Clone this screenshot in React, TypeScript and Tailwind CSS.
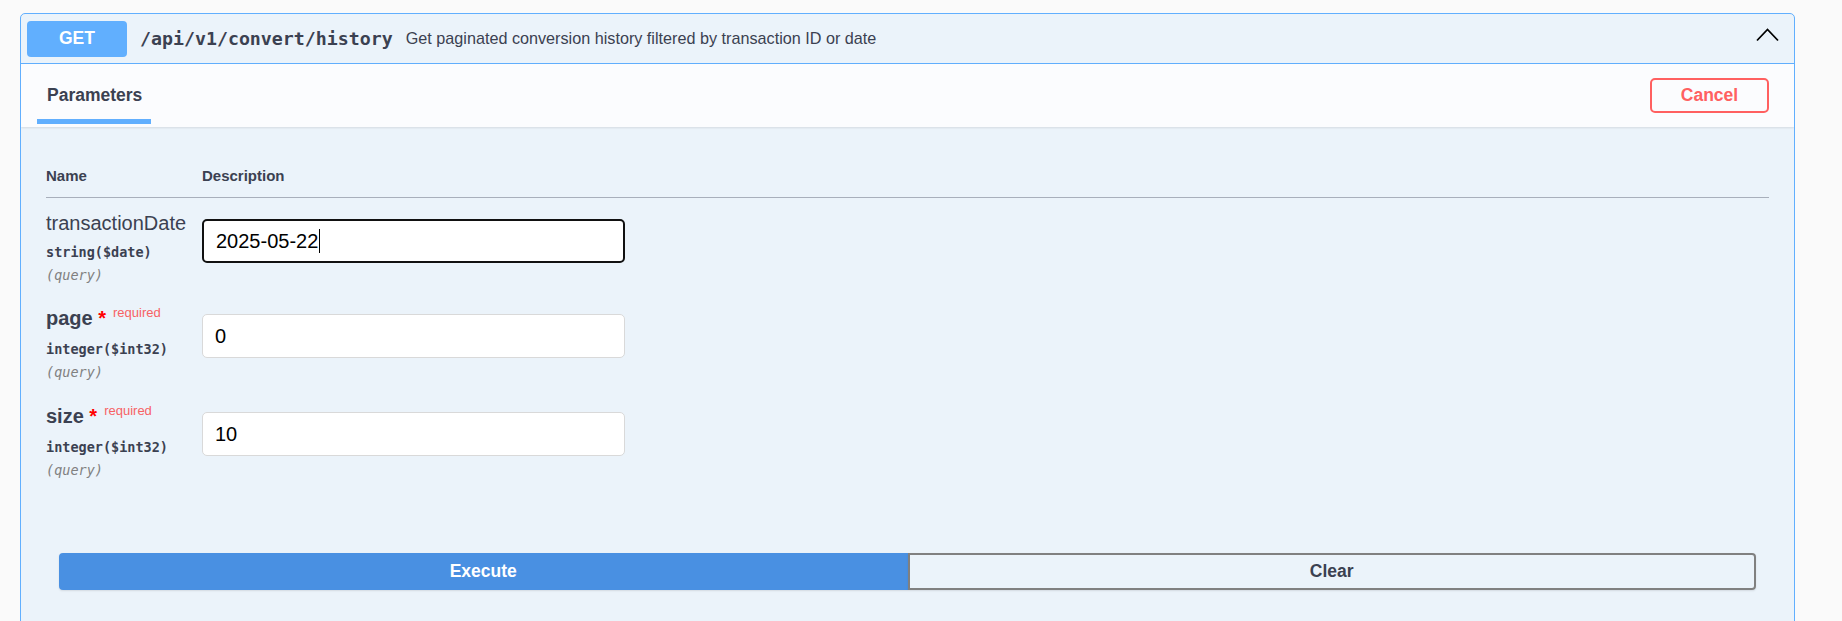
import React from "react";

const sans = { fontFamily: '"Liberation Sans", Arial, sans-serif' };
const mono = { fontFamily: '"DejaVu Sans Mono", "Liberation Mono", monospace' };

type Param = {
  name: string;
  required: boolean;
  type: string;
  value: string;
  focused?: boolean;
};

const params: Param[] = [
  { name: "transactionDate", required: false, type: "string($date)", value: "2025-05-22", focused: true },
  { name: "page", required: true, type: "integer($int32)", value: "0" },
  { name: "size", required: true, type: "integer($int32)", value: "10" },
];

function Row({ p, first }: { p: Param; first: boolean }) {
  return (
    <div className={`flex items-start ${first ? "pt-[13.5px]" : "pt-[23.5px]"}`}>
      <div className="w-[156px] shrink-0">
        <div className="text-[20px] leading-[23px] text-[#3b4151] whitespace-nowrap" style={sans}>
          {p.required ? (
            <>
              <span className="font-bold">{p.name}</span>
              <span className="font-bold text-[#ff0000]">{"\u00a0*"}</span>
              <span className="relative top-[-8px] ml-[7px] text-[13px] font-normal text-[#f76164]">required</span>
            </>
          ) : (
            <span>{p.name}</span>
          )}
        </div>
        <div className="mt-[9px] text-[13.5px] leading-[17px] font-bold text-[#3b4151]" style={mono}>
          {p.type}
        </div>
        <div className="mt-[6px] text-[13.5px] leading-[17px] italic text-[#808080]" style={mono}>
          (query)
        </div>
      </div>
      <div
        className={`mt-[7px] flex h-[44px] w-[423px] items-center rounded-[5px] bg-white px-[12px] text-[20px] text-black ${
          p.focused ? "border-2 border-[#111111] px-[11px]" : "border border-[#d9d9d9]"
        }`}
        style={sans}
      >
        <span>{p.value}</span>
        {p.focused && <span className="ml-[1px] inline-block h-[24px] w-[1px] bg-black" />}
      </div>
    </div>
  );
}

export default function App() {
  return (
    <div className="min-h-screen bg-[#fafafa] pt-[13px]" style={sans}>
      <div className="ml-[20px] w-[1775px] overflow-hidden rounded-[5px] border border-[#61affe] bg-[#ebf3fa]">
        {/* Summary header */}
        <div className="flex h-[50px] items-center border-b border-[#61affe] pl-[6px] pr-[14px]">
          <div className="flex h-[36px] w-[100px] items-center justify-center rounded-[4px] bg-[#61affe] text-[17.5px] font-bold text-white">
            GET
          </div>
          <div className="ml-[13px] text-[18.25px] font-bold text-[#3b4151]" style={mono}>
            /api/v1/convert/history
          </div>
          <div className="ml-[13px] text-[16.2px] text-[#3b4151]">
            Get paginated conversion history filtered by transaction ID or date
          </div>
          <svg className="ml-auto -mt-[4px]" width="25" height="25" viewBox="0 0 25 25" fill="none">
            <polyline points="2,16.5 12.5,5.5 23,16.5" stroke="#000" strokeWidth="1.8" />
          </svg>
        </div>

        {/* Tab header */}
        <div className="flex h-[63px] items-center justify-between bg-[#fbfcfe] px-[25px] shadow-[0_1px_2px_rgba(0,0,0,0.1)]">
          <div className="relative flex h-full items-center pl-[1px]">
            <span className="text-[17.5px] font-bold text-[#3b4151]">Parameters</span>
            <span className="absolute bottom-[3px] left-[-9px] h-[5px] w-[114px] bg-[#61affe]" />
          </div>
          <button className="h-[35px] w-[119px] rounded-[5px] border-2 border-[#ff6060] bg-transparent text-[17.5px] font-bold text-[#ff6060]">
            Cancel
          </button>
        </div>

        {/* Body */}
        <div className="px-[25px] pt-[40px]">
          <div className="flex border-b border-[#a8afbb] pb-[13px] text-[15px] leading-[17px] font-bold text-[#3b4151]">
            <div className="w-[156px]">Name</div>
            <div>Description</div>
          </div>
          {params.map((p, i) => (
            <Row key={p.name} p={p} first={i === 0} />
          ))}
        </div>

        <div className="flex px-[38px] pt-[74px] pb-[40px]">
          <button className="h-[37px] flex-1 rounded-l-[4px] border-2 border-[#4990e2] bg-[#4990e2] text-[17.5px] font-bold text-white shadow-[0_1px_2px_rgba(0,0,0,0.1)]">
            Execute
          </button>
          <button className="h-[37px] flex-1 rounded-r-[4px] border-2 border-[#808080] bg-transparent text-[17.5px] font-bold text-[#3b4151] shadow-[0_1px_2px_rgba(0,0,0,0.1)]">
            Clear
          </button>
        </div>
      </div>
    </div>
  );
}
